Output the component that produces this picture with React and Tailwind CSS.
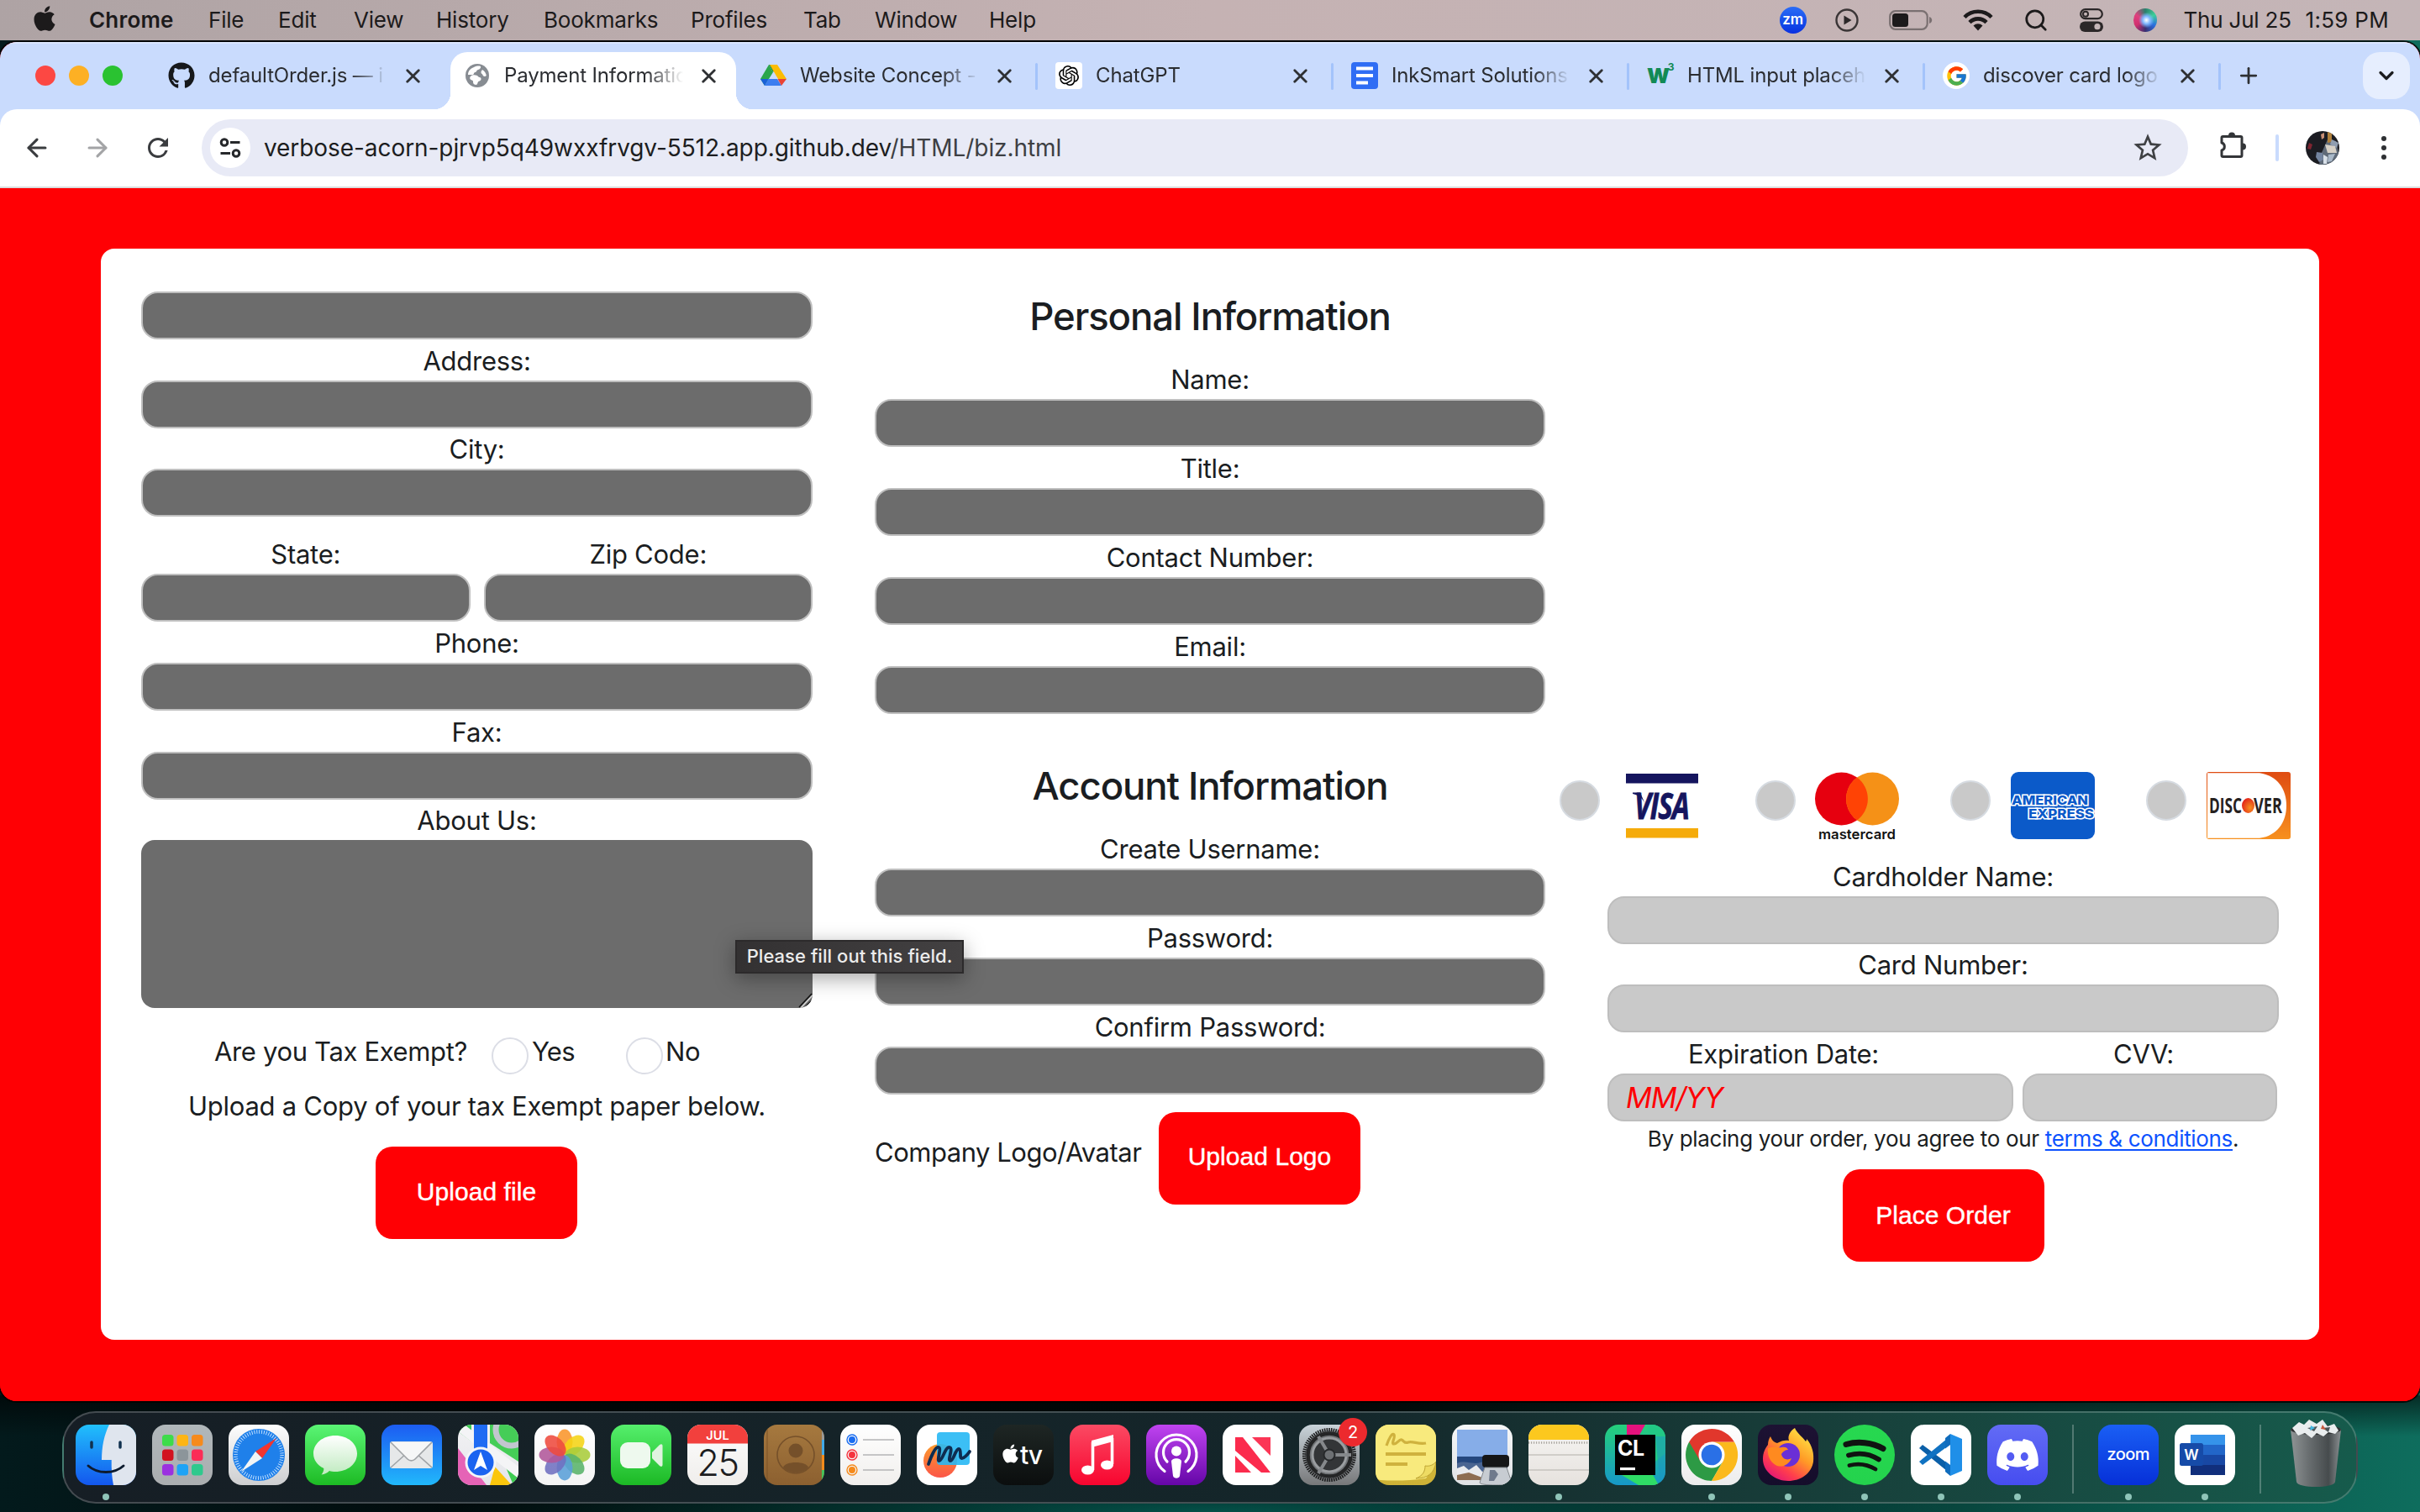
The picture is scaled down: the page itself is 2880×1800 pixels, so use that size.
import React from "react";
import { ArrowLeft, ArrowRight, X, Plus, ChevronDown, Search } from "lucide-react";
import { FaApple, FaGithub, FaDiscord } from "react-icons/fa";
import { FcGoogle } from "react-icons/fc";
import { MdStarBorder, MdRefresh } from "react-icons/md";
import { SiOpenai } from "react-icons/si";

/* ---------- macOS menu bar ---------- */

const menus = [
  ["File", "w-[83px]"],
  ["Edit", "w-[90px]"],
  ["View", "w-[98px]"],
  ["History", "w-[128px]"],
  ["Bookmarks", "w-[175px]"],
  ["Profiles", "w-[134px]"],
  ["Tab", "w-[85px]"],
  ["Window", "w-[136px]"],
  ["Help", "w-[70px]"],
];

function MenuBar() {
  return (
    <header className="flex h-12 items-center bg-linear-to-r from-[#aea3a4] via-[#c5b2b3] to-[#c4b5b7] pb-px text-[26px] leading-none tracking-[-0.2px] text-[#1c1a1b]">
      <FaApple className="ml-[36px] mt-[-4px] size-[34px]" />
      <span className="ml-[36px] w-[142px] font-semibold tracking-[0.2px]">Chrome</span>
      {menus.map(([name, width]) => (
        <span key={name} className={width}>{name}</span>
      ))}
      <div className="ml-auto flex items-center pr-[37px]">
        <span className="flex size-8 items-center justify-center rounded-full bg-linear-to-b from-[#2b6cf6] to-[#0b2fe0] text-[17px] font-semibold text-white">zm</span>
        <svg className="ml-[34px] size-7" viewBox="0 0 28 28">
          <circle cx="14" cy="14" r="12.5" fill="none" stroke="#3a3536" strokeWidth="2.4" />
          <path d="M10.5 8.5v11l9-5.500z" fill="#2b2728" />
        </svg>
        <svg className="ml-[36px] h-6 w-[52px]" viewBox="0 0 52 24">
          <rect x="1.200" y="1.200" width="44.500" height="21.600" rx="6.500" fill="none" stroke="#7a7071" strokeWidth="2.200" />
          <rect x="4" y="4" width="19" height="16" rx="3.500" fill="#1c1a1b" />
          <path d="M48 8v8c2.500-1 3.200-2.500 3.200-4S50.500 9 48 8z" fill="#7a7071" />
        </svg>
        <svg className="ml-[36px] h-[26px] w-9" viewBox="0 0 36 26">
          <g fill="none" stroke="#1c1a1b" strokeWidth="4.600">
            <path d="M2 9.500a22.500 22.500 0 0 1 32 0" />
            <path d="M8 15.600a14 14 0 0 1 20 0" />
          </g>
          <path d="M18 25.500l-5.500-6a8 8 0 0 1 11 0z" fill="#1c1a1b" />
        </svg>
        <Search className="ml-[36px] size-[30px]" strokeWidth={2.2} />
        <svg className="ml-[37px] h-7 w-7" viewBox="0 0 28 28">
          <rect x="1.200" y="1.200" width="25.600" height="11" rx="5.500" fill="none" stroke="#2b2728" strokeWidth="2.200" />
          <circle cx="7" cy="6.700" r="3" fill="none" stroke="#2b2728" strokeWidth="2" />
          <rect x="0" y="15.500" width="28" height="12.500" rx="6.250" fill="#2b2728" />
          <circle cx="21" cy="21.700" r="3.600" fill="#c4b5b7" />
        </svg>
        <span className="ml-[36px] size-7 rounded-full bg-[radial-gradient(circle_at_55%_50%,#ffffff_0,#7fb7ff_22%,transparent_45%),conic-gradient(#2b7f6b,#3ccf9a,#2a6fe0,#3a2f6f,#d0306f,#e0407f,#2b7f6b)]" />
        <span className="ml-[32px] w-[145px]">Thu Jul 25</span>
        <span className="tracking-[0.300px]">1:59 PM</span>
      </div>
    </header>
  );
}

/* ---------- browser chrome ---------- */

function GlobeIcon() {
  return (
    <svg className="mx-0.5 size-7" viewBox="0 0 28 28">
      <circle cx="14" cy="14" r="14" fill="#878c92" />
      <path d="M10 4c3-1.500 6-1.800 8-1 .5 2-1 3.500-3 4s-1.500 2.500-3.500 3-1 2.500-3 3H3c0-4 2.500-7.500 7-9z" fill="#fff" />
      <path d="M8 13.500c3-.8 6 0 7 1.500s3.500.5 3.500 3-2.500 2-3.500 3.500-.5 3-2.500 3.500c-3-.2-3.500-2-3.500-4s-2.500-1-3.500-3 1-4 2.500-4.500z" fill="#fff" />
      <path d="M20 7c3 2 4.500 4.500 4.800 7-1.500 1.500-3.800 1-4.300-.8s-2-1.200-2-3S19 8.500 20 7z" fill="#fff" />
    </svg>
  );
}

function DriveIcon() {
  return (
    <svg className="size-8" viewBox="0 0 32 32">
      <path d="M11 3h10l-5 9z" fill="#0f8a3c" />
      <path d="M11 3l5 9L6 28 1 20z" fill="#2aa64c" />
      <path d="M21 3H12l10 17h10z" fill="#fbbc04" />
      <path d="M1 20h9.500L6 28z" fill="#1a60d8" />
      <path d="M10.500 20H21l5 8H6z" fill="#3b7df0" />
      <path d="M21.500 20H32l-6 8z" fill="#ea4335" />
    </svg>
  );
}

function DocsIcon() {
  return (
    <svg className="size-8" viewBox="0 0 32 32">
      <rect width="32" height="32" rx="4" fill="#2f6df4" />
      <path d="M6 7.500h20M6 16h20M6 24.500h14" stroke="#fff" strokeWidth="4" />
    </svg>
  );
}

function PuzzleIcon({ className }) {
  return (
    <svg className={className} viewBox="0 0 36 36">
      <path d="M7.500 8.500h21a1.500 1.500 0 0 1 1.500 1.500v21a1.500 1.500 0 0 1-1.500 1.500h-21a1.500 1.500 0 0 1-1.500-1.500v-6a4.700 4.700 0 0 0 0-9v-6a1.500 1.500 0 0 1 1.500-1.500z" fill="none" stroke="#333538" strokeWidth="3" strokeLinejoin="round" />
      <path d="M14 7.500a4 4 0 0 1 8 0zM31 16.500a4 4 0 0 1 0 8z" fill="#333538" />
    </svg>
  );
}

const tabs = [
  { title: "defaultOrder.js — i", icon: <FaGithub className="size-8 text-[#16181b]" /> },
  { title: "Payment Informatio", icon: <GlobeIcon />, active: true },
  { title: "Website Concept -", icon: <DriveIcon />, divider: true },
  {
    title: "ChatGPT",
    divider: true,
    icon: (
      <span className="flex size-8 items-center justify-center rounded bg-white">
        <SiOpenai className="size-6 text-black" />
      </span>
    ),
  },
  { title: "InkSmart Solutions", icon: <DocsIcon />, divider: true },
  {
    title: "HTML input placeh",
    divider: true,
    icon: (
      <span className="flex size-8 items-start text-[#128a55]">
        <b className="mt-1 text-[25px] font-black leading-none tracking-tighter">W</b>
        <b className="ml-[-1px] text-[12px] leading-none">3</b>
      </span>
    ),
  },
  {
    title: "discover card logo",
    divider: true,
    icon: (
      <span className="flex size-8 items-center justify-center rounded-full bg-white">
        <FcGoogle className="size-[27px]" />
      </span>
    ),
  },
];

function Tab({ title, icon, active, divider }) {
  return (
    <div className="flex h-[68px] w-[352px] shrink-0">
      <div
        className={
          active
            ? "relative flex w-[340px] items-center rounded-t-[20px] bg-white pb-[12px] pl-4 before:absolute before:bottom-0 before:-left-5 before:size-5 before:bg-[radial-gradient(circle_at_0_0,transparent_20px,white_20.5px)] after:absolute after:bottom-0 after:-right-5 after:size-5 after:bg-[radial-gradient(circle_at_100%_0,transparent_20px,white_20.5px)]"
            : "flex w-[340px] items-center pb-[12px] pl-4"
        }
      >
        <span className="flex w-8 shrink-0">{icon}</span>
        <span className="ml-4 w-[222px] shrink-0 whitespace-nowrap text-[24px] leading-8 tracking-[-0.150px] text-[#2a2c30] [mask-image:linear-gradient(to_right,#000_76%,transparent_96%)]">
          {title}
        </span>
        <X className="ml-[8px] size-[27px] shrink-0 text-[#2e3033]" strokeWidth={2.5} />
      </div>
      {divider && <span className="ml-[4px] mt-[13px] h-8 w-[3px] rounded bg-[#a3c3fb]" />}
    </div>
  );
}

function TabStrip() {
  return (
    <div className="flex h-[80px] items-end border-t-2 border-[#dbe6fd] bg-[#c9dbfd]">
      <div className="mb-[28px] ml-[42px] flex w-[142px] gap-4">
        <span className="size-6 rounded-full bg-[#fc4843]" />
        <span className="size-6 rounded-full bg-[#fdb024]" />
        <span className="size-6 rounded-full bg-[#2ac231]" />
      </div>
      {tabs.map((tab) => (
        <Tab key={tab.title} {...tab} />
      ))}
      <Plus className="mb-[25px] ml-[13px] size-[30px] text-[#2e3033]" strokeWidth={2.2} />
      <span className="mb-3 mr-[12px] ml-auto flex size-14 items-center justify-center rounded-[20px] bg-[#e6eefe]">
        <ChevronDown className="size-7 text-[#1c1d1f]" strokeWidth={2.8} />
      </span>
    </div>
  );
}

function Toolbar() {
  return (
    <div className="bg-[#c9dbfd]">
      <div className="flex h-[92px] items-center rounded-t-[20px] bg-white">
        <ArrowLeft className="ml-[27px] size-[34px] text-[#3a3c3f]" strokeWidth={2.2} />
        <ArrowRight className="ml-[38px] size-[34px] text-[#a3a4a6]" strokeWidth={2.2} />
        <MdRefresh className="ml-[37px] size-[36px] text-[#3a3c3f]" />
        <div className="ml-[34px] flex h-[68px] w-[2364px] items-center rounded-full bg-[#e8eaf6]">
          <span className="ml-2.5 flex size-12 items-center justify-center rounded-full bg-white">
            <svg className="size-7" viewBox="0 0 28 28" fill="none" stroke="#26282b" strokeWidth="3">
              <circle cx="7" cy="7.500" r="3.800" />
              <path d="M14 7.500h11.500M2.500 20.500H14" />
              <circle cx="21" cy="20.500" r="3.800" />
            </svg>
          </span>
          <span className="ml-4 text-[28px] leading-none tracking-[-0.070px] text-[#1c1d20]">
            verbose-acorn-pjrvp5q49wxxfrvgv-5512.app.github.dev<span className="text-[#3d3f43]">/HTML/biz.html</span>
          </span>
          <MdStarBorder className="mr-[28px] ml-auto size-10 text-[#3f4144]" />
        </div>
        <PuzzleIcon className="-mt-2 ml-[34px] size-[36px]" />
        <span className="ml-[34px] h-8 w-1 rounded bg-[#c9dbfd]" />
        <svg className="ml-[32px] size-10 rounded-full" viewBox="0 0 40 40">
          <rect width="40" height="40" fill="#1b1c22" />
          <path d="M26 10l10 2 4 18-8 10H16l2-12z" fill="#5f6a78" />
          <path d="M26 1h5v12l-5 1z" fill="#b0803c" />
          <path d="M18 4l4-2v6l-3 2z" fill="#c98f76" />
          <path d="M31 10l8 4-2 6-8-4z" fill="#8f9db0" />
          <path d="M23 16l12 2 2 8-11 0z" fill="#d6d0c6" />
          <path d="M4 14l4 2-2 6-4-1z" fill="#7d2430" />
          <path d="M13 25l7 1 1 8-5 3-4-6z" fill="#7384a0" />
          <path d="M21 28l5 3-1 8h-4z" fill="#d8e0e8" />
          <path d="M27 28l8-1-4 9-5 1z" fill="#a9b8c8" />
        </svg>
        <span className="ml-[50px] flex flex-col gap-[5px]">
          <i className="size-1.5 rounded-full bg-[#2e3033]" />
          <i className="size-1.5 rounded-full bg-[#2e3033]" />
          <i className="size-1.5 rounded-full bg-[#2e3033]" />
        </span>
      </div>
    </div>
  );
}

/* ---------- form ---------- */

function Label({ children, className = "h-[49px] pt-[2px]" }) {
  return (
    <div className={`${className} text-center text-[31px] leading-[48px] tracking-[-0.250px] whitespace-nowrap text-[#1a1d21]`}>
      {children}
    </div>
  );
}

const Dark = () => <div className="h-[57px] rounded-[20px] border-2 border-[#bfbfbf] bg-[#6c6c6c]" />;

function Light({ className = "", children }) {
  return (
    <div className={`${className} flex h-[57px] items-center rounded-[20px] border-2 border-[#bebebe] bg-[#c9c9c9]`}>
      {children}
    </div>
  );
}

function RedButton({ children, className = "" }) {
  return (
    <button className={`${className} flex h-[110px] w-60 items-center justify-center rounded-[20px] bg-[#ff0004] font-['Liberation_Sans',sans-serif] text-[30px] tracking-[0.050px] text-white [-webkit-text-stroke:0.4px_white]`}>
      {children}
    </button>
  );
}

function CompanyColumn() {
  return (
    <section className="w-[799px]">
      <Dark />
      <Label>Address:</Label>
      <Dark />
      <Label className="h-12 pt-px">City:</Label>
      <Dark />
      <div className="mt-[19px] grid grid-cols-2 gap-x-4">
        <Label>State:</Label>
        <Label>Zip Code:</Label>
        <Dark />
        <Dark />
      </div>
      <Label>Phone:</Label>
      <Dark />
      <Label>Fax:</Label>
      <Dark />
      <Label className="h-12 pt-px">About Us:</Label>
      <div className="flex h-[200px] items-end justify-end overflow-hidden rounded-2xl bg-[#6c6c6c]">
        <svg className="h-5 w-[18px]" viewBox="0 0 18 20">
          <path d="M2 19L17 3" stroke="#111" strokeWidth="1.500" />
          <path d="M4 20L18 5" stroke="#ddd" strokeWidth="1.500" />
          <path d="M9 19L17 11" stroke="#111" strokeWidth="1.500" />
        </svg>
      </div>
      <div className="mt-7 ml-[87px] flex h-12">
        <Label className="w-[330px] [&]:text-left [&]:tracking-[-0.350px]">Are you Tax Exempt?</Label>
        <span className="mt-[7px] size-11 rounded-full border-2 border-[#dcdee6]" />
        <Label className="ml-[4px] w-[112px] [&]:text-left [&]:tracking-[-0.800px]">Yes</Label>
        <span className="mt-[7px] size-11 rounded-full border-2 border-[#dcdee6]" />
        <Label className="ml-[3px] [&]:text-left">No</Label>
      </div>
      <Label className="mt-[17px]">Upload a Copy of your tax Exempt paper below.</Label>
      <RedButton className="mt-6 ml-[279px] pb-[4px]">Upload file</RedButton>
    </section>
  );
}

function Heading({ children, className = "" }) {
  return (
    <h3 className={`${className} h-[58px] text-center text-[45.500px] leading-[58px] font-[450] tracking-[-1.100px] text-[#1a1d21]`}>
      {children}
    </h3>
  );
}

function PersonColumn() {
  return (
    <section className="ml-[74px] w-[798px]">
      <Heading className="mb-[21px] pt-px">Personal Information</Heading>
      <Label>Name:</Label>
      <Dark />
      <Label>Title:</Label>
      <Dark />
      <Label>Contact Number:</Label>
      <Dark />
      <Label>Email:</Label>
      <Dark />
      <Heading className="mt-[57px] mb-5">Account Information</Heading>
      <Label>Create Username:</Label>
      <Dark />
      <Label>Password:</Label>
      <Dark />
      <Label>Confirm Password:</Label>
      <Dark />
      <div className="mt-[21px] flex">
        <Label className="mt-6 w-[338px] [&]:text-left [&]:tracking-[-0.480px]">Company Logo/Avatar</Label>
        <RedButton className="pb-[5px]">Upload Logo</RedButton>
      </div>
    </section>
  );
}

function VisaLogo() {
  return (
    <svg className="h-20 w-[100px]" viewBox="0 0 100 80">
      <rect x="7" y="2" width="86" height="11.500" fill="#15155e" />
      <rect x="7" y="67" width="86" height="11.500" fill="#f5ab0a" />
      <g transform="translate(17 55.500) scale(0.780 1)">
        <text fontFamily="Open Sans" fontWeight="700" fontStyle="italic" fontSize="43" letterSpacing="-1.500" fill="#15155e" stroke="#15155e" strokeWidth="0.800">VISA</text>
      </g>
      <path d="M15 24.500h9l6 14c-3-7-8-11-15-12.500z" fill="#15155e" />
    </svg>
  );
}

function MastercardLogo() {
  return (
    <svg className="-ml-px h-[88px] w-[100px]" viewBox="0 0 100 88">
      <circle cx="31.500" cy="32" r="31.500" fill="#e6000f" />
      <circle cx="68.500" cy="32" r="31.500" fill="#f59117" />
      <path d="M50 6.600a31.500 31.500 0 0 1 0 50.800a31.500 31.500 0 0 1 0-50.800z" fill="#ff4305" />
      <text x="4" y="80" fontFamily="Inter" fontWeight="600" fontSize="16.500" textLength="92" lengthAdjust="spacingAndGlyphs" fill="#111">mastercard</text>
    </svg>
  );
}

function AmexLogo() {
  return (
    <svg className="h-20 w-[100px] rounded-[9px]" viewBox="0 0 100 80">
      <rect width="100" height="80" fill="#0b5ac9" />
      <g fontFamily="Inter" fontWeight="800" fontSize="15" fill="#0b5ac9" stroke="#fff" strokeWidth="3" paintOrder="stroke">
        <text x="1" y="38.500" textLength="91" lengthAdjust="spacingAndGlyphs">AMERICAN</text>
        <text x="21" y="55" textLength="78" lengthAdjust="spacingAndGlyphs">EXPRESS</text>
      </g>
    </svg>
  );
}

function DiscoverLogo() {
  return (
    <svg className="h-20 w-[100px] rounded-[3px]" viewBox="0 0 100 80">
      <defs>
        <linearGradient id="disc" x1="0" y1="0" x2="0" y2="1">
          <stop offset="0" stopColor="#df4c12" />
          <stop offset="1" stopColor="#f7901e" />
        </linearGradient>
        <radialGradient id="disc-o" cx="0.650" cy="0.650" r="0.700">
          <stop offset="0" stopColor="#f7901e" />
          <stop offset="1" stopColor="#e2231a" />
        </radialGradient>
      </defs>
      <rect width="100" height="80" fill="url(#disc)" />
      <path d="M1 1.200h62C84 4 95 20 95 40S84 76 63 78.800H1z" fill="#fff" />
      <g fontFamily="Open Sans" fontWeight="700" fontSize="24.500" fill="#26211f">
        <text x="3" y="49" textLength="39" lengthAdjust="spacingAndGlyphs">DISC</text>
        <text x="56" y="49" textLength="34" lengthAdjust="spacingAndGlyphs">VER</text>
      </g>
      <ellipse cx="49.500" cy="40" rx="7.500" ry="9" fill="url(#disc-o)" />
    </svg>
  );
}

function PaymentColumn() {
  return (
    <section className="mt-[572px] ml-[74px] w-[799px]">
      <div className="-ml-[57px] flex h-[82px] w-[872px] items-start">
        {[VisaLogo, MastercardLogo, AmexLogo, DiscoverLogo].map((Logo, i) => (
          <div key={i} className="flex w-[232.600px] shrink-0 items-start gap-6">
            <span className="mt-2.5 size-12 rounded-full border-2 border-[#d6dbe1] bg-[#c9c9c9]" />
            <Logo />
          </div>
        ))}
      </div>
      <Label className="mt-[17px] h-[49px] pt-[2px]">Cardholder Name:</Label>
      <Light />
      <Label className="h-12 pt-px">Card Number:</Label>
      <Light />
      <div className="flex">
        <Label className="h-[49px] w-[419px] pt-[2px]">Expiration Date:</Label>
        <Label className="ml-[58px] h-[49px] w-[322px] pt-[2px]">CVV:</Label>
      </div>
      <div className="flex gap-[11px]">
        <Light className="w-[483px] pl-5">
          <span className="text-[34px] leading-none tracking-[-0.950px] text-[#ff0004] italic">MM/YY</span>
        </Light>
        <Light className="w-[303px]" />
      </div>
      <p className="h-10 pt-px text-center text-[26px] leading-10 tracking-[-0.320px] whitespace-nowrap text-[#1a1d21]">
        By placing your order, you agree to our{" "}
        <a className="text-[#0d52ff] underline decoration-2 underline-offset-[3px]">terms &amp; conditions</a>.
      </p>
      <RedButton className="mx-auto mt-[17px] pb-[2px]">Place Order</RedButton>
    </section>
  );
}

/* ---------- dock ---------- */

const Grad = ({ id, from, to }) => (
  <linearGradient id={id} x1="0" y1="0" x2="0" y2="1">
    <stop offset="0" stopColor={from} />
    <stop offset="1" stopColor={to} />
  </linearGradient>
);

/* Rounded square of one dock app; drawings use a 72-unit grid. */
function AppIcon({ id, from, to, children }) {
  return (
    <svg className="size-[72px] rounded-2xl" viewBox="0 0 72 72">
      <defs><Grad id={`bg-${id}`} from={from} to={to} /></defs>
      <rect width="72" height="72" fill={`url(#bg-${id})`} />
      {children}
    </svg>
  );
}

const padColors = ["#3ddc4a", "#fdb515", "#f68a1c", "#d2121f", "#8c959a", "#fb2c57", "#9b30e0", "#1fa3f5", "#2fc98d"];
const petals = ["#f9952a", "#f5d415", "#a9cc3a", "#59b36a", "#5a9fd8", "#6f6fc0", "#b0579a", "#ee4a3d"];

const dockApps = [
  {
    name: "Finder", running: true, from: "#21c0fc", to: "#1356ee",
    art: (
      <>
        <path d="M40 0h32v72H45c-2-10-2.500-20-2.300-30H31C31 26 34 12 40 0z" fill="#dfe5ee" />
        <path d="M19 21v6M53 21v6" stroke="#11314f" strokeWidth="3.500" strokeLinecap="round" />
        <path d="M15 49c11 10 31 10 42 0" fill="none" stroke="#0d1b2e" strokeWidth="3" strokeLinecap="round" />
      </>
    ),
  },
  {
    name: "Launchpad", from: "#b0b7ba", to: "#abaeb0",
    art: padColors.map((c, i) => (
      <rect key={c} x={12 + (i % 3) * 17.5} y={12 + Math.floor(i / 3) * 17.5} width="13.500" height="13.500" rx="3.500" fill={c} />
    )),
  },
  {
    name: "Safari", from: "#fdfdfd", to: "#cdced0",
    art: (
      <>
        <circle cx="36" cy="36" r="31" fill="#1f80ea" />
        <circle cx="36" cy="36" r="27.500" fill="none" stroke="#cfe6ff" strokeWidth="4.500" strokeDasharray="0.900 1.980" />
        <path d="M57 16L40 40l-8-8z" fill="#f3352f" />
        <path d="M15 56l17-24 8 8z" fill="#f2f4f6" />
      </>
    ),
  },
  {
    name: "Messages", from: "#5af575", to: "#1dbb24",
    art: (
      <>
        <defs><Grad id="bubble" from="#ffffff" to="#bfeabf" /></defs>
        <path d="M36 13c15 0 26 9.500 26 21.500S51 56 36 56c-2.500 0-5-.300-7-1-2.500 2.500-5.500 4-9.500 4.500 2-2.500 3-5 2.800-7.500C14.500 48 10 42 10 34.500 10 22.500 21 13 36 13z" fill="url(#bubble)" />
      </>
    ),
  },
  {
    name: "Mail", from: "#1c5cf2", to: "#21b8fb",
    art: (
      <>
        <rect x="10" y="20" width="51" height="32" rx="3" fill="#e6e8e9" />
        <path d="M11 51l19-17M60 51L41 34" stroke="#a0a4a7" strokeWidth="1.600" />
        <path d="M11 21l20 20c2.500 2.500 6.500 2.500 9 0l20-20" fill="#f6f7f7" stroke="#a0a4a7" strokeWidth="1.600" />
      </>
    ),
  },
  {
    name: "Maps", from: "#f2f2f4", to: "#e4e5ea",
    art: (
      <>
        <path d="M0 0h16v20L0 8z" fill="#3ecb52" />
        <path d="M38 0h34v44L38 22z" fill="#45cd57" />
        <path d="M0 28l34 44H0z" fill="#e563b6" />
        <path d="M44 50l20 22H38z" fill="#fbc60c" />
        <path d="M54 44l18 16v12H66z" fill="#3ecb52" />
        <path d="M0 8l72 56v-14L0-6z" fill="#f4f4f6" />
        <circle cx="64" cy="6" r="19" fill="none" stroke="#c2c6cf" strokeWidth="7" />
        <rect x="19" width="16" height="40" fill="#1f6bf3" />
        <circle cx="27" cy="45" r="18.500" fill="#f3f5f8" />
        <circle cx="27" cy="45" r="15.500" fill="#1a63f0" />
        <path d="M27 32l8 22-8-5-8 5z" fill="#fff" />
      </>
    ),
  },
  {
    name: "Photos", from: "#ffffff", to: "#f4f4f4",
    art: petals.map((c, i) => (
      <ellipse key={c} cx="36" cy="20.500" rx="9.500" ry="15" fill={c} fillOpacity="0.880" transform={`rotate(${i * 45} 36 36)`} />
    )),
  },
  {
    name: "FaceTime", from: "#55ef6c", to: "#1cb925",
    art: (
      <>
        <rect x="11" y="21" width="36" height="31" rx="9" fill="#eef9ee" />
        <path d="M49 33l9-9c2-1.500 3.500-1 3.500 1.500v22c0 2.500-1.500 3-3.500 1.500l-9-9z" fill="#dff3df" />
      </>
    ),
  },
  {
    name: "Calendar", from: "#fefefe", to: "#efedeb",
    art: (
      <>
        <rect width="72" height="22.500" fill="#f2403d" />
        <text x="36" y="17.500" textAnchor="middle" fontFamily="Inter" fontWeight="600" fontSize="14.500" fill="#fff">JUL</text>
        <text x="36" y="60.500" textAnchor="middle" fontFamily="Inter" fontWeight="300" fontSize="43" letterSpacing="-1.500" fill="#1d1d1f">25</text>
      </>
    ),
  },
  {
    name: "Contacts", from: "#a6793f", to: "#8c6030",
    art: (
      <>
        <rect x="69" width="3" height="18" fill="#9a9a98" />
        <rect x="69" y="18" width="3" height="18" fill="#41a9e8" />
        <rect x="69" y="36" width="3" height="18" fill="#f38b1c" />
        <rect x="69" y="54" width="3" height="18" fill="#46c35a" />
        <path d="M4 0v72" stroke="#7a5226" strokeWidth="1" />
        <circle cx="38" cy="36" r="22" fill="none" stroke="#75502a" strokeWidth="1.600" />
        <circle cx="38" cy="31" r="8.500" fill="#75502a" />
        <path d="M23 51c2-8 28-8 30 0-7 8-23 8-30 0z" fill="#75502a" />
      </>
    ),
  },
  {
    name: "Reminders", from: "#ffffff", to: "#f1efed",
    art: [["#1a6df0", 18], ["#f5333f", 36], ["#f58a1c", 54]].map(([c, y]) => (
      <g key={c}>
        <circle cx="14" cy={y} r="6" fill="none" stroke={c} strokeWidth="1.400" />
        <circle cx="14" cy={y} r="4" fill={c} />
        <path d={`M27 ${y}h37`} stroke="#b4b4b6" strokeWidth="1.600" />
      </g>
    )),
  },
  {
    name: "Freeform", from: "#ffffff", to: "#ffffff",
    art: (
      <>
        <defs><Grad id="free" from="#fb9a2c" to="#fb5648" /></defs>
        <circle cx="28" cy="43" r="20" fill="url(#free)" />
        <rect x="24" y="9" width="39" height="39" rx="4" fill="#27b8f4" fillOpacity="0.900" />
        <path d="M14 47c3-9 8-21 12-20s-3 17 1 16 7-17 12-16-3 16 1 16 6-14 10-14 0 12 4 11 6-4 9-8" fill="none" stroke="#0e2c50" strokeWidth="3.800" strokeLinecap="round" />
      </>
    ),
  },
  {
    name: "TV", from: "#1e2624", to: "#0b0e0e",
    art: (
      <>
        <g transform="translate(8 22)"><FaApple size={25} color="#fff" /></g>
        <text x="32" y="46.500" fontFamily="Inter" fontWeight="500" fontSize="30" letterSpacing="-1" fill="#fff">tv</text>
      </>
    ),
  },
  {
    name: "Music", from: "#fb4a63", to: "#f8052f",
    art: (
      <>
        <path d="M26 19l26-7v8l-26 7z" fill="#fff" />
        <path d="M27.500 21v33M50.500 16v31" stroke="#fff" strokeWidth="3.600" />
        <ellipse cx="21.500" cy="54" rx="7.500" ry="5.500" fill="#fff" />
        <ellipse cx="44.500" cy="48" rx="7.500" ry="5.500" fill="#fff" />
      </>
    ),
  },
  {
    name: "Podcasts", from: "#c044f0", to: "#6506a8",
    art: (
      <>
        <g fill="none" stroke="#fff" strokeWidth="3.200" strokeLinecap="round">
          <path d="M22 55.500a24 24 0 1 1 28 0" />
          <path d="M25 44a15.500 15.500 0 1 1 22 0" />
        </g>
        <circle cx="36" cy="31.500" r="6" fill="#fff" />
        <path d="M30 44c0-5 12-5 12 0l-2 17c-.800 3.500-7.200 3.500-8 0z" fill="#fff" />
      </>
    ),
  },
  {
    name: "News", from: "#ffffff", to: "#ffffff",
    art: (
      <>
        <path d="M15 15h9l33 42h-11L15 31z" fill="#fb2b4d" />
        <path d="M35 15h22v22z" fill="#fb2b4d" opacity="0.950" />
        <path d="M15 37l19 20H15z" fill="#fb2b4d" />
      </>
    ),
  },
  {
    name: "Settings", badge: "2", from: "#c9d3d9", to: "#77787a",
    art: (
      <>
        <circle cx="36" cy="36" r="29" fill="#707376" />
        <circle cx="36" cy="36" r="30" fill="none" stroke="#1b1c1d" strokeWidth="4" strokeDasharray="1.600 1.100" />
        <circle cx="36" cy="36" r="25.500" fill="none" stroke="#242526" strokeWidth="4.500" />
        <circle cx="36" cy="36" r="20" fill="#333537" stroke="#9a9da0" strokeWidth="3" />
        <path d="M36 36h26M36 36L23 14M36 36L23 58" stroke="#85888b" strokeWidth="4" />
        <circle cx="36" cy="36" r="6.500" fill="#6d7073" stroke="#26282a" strokeWidth="2" />
      </>
    ),
  },
  {
    name: "Stickies", from: "#d8be3f", to: "#cdb136",
    art: (
      <>
        <path d="M0 0h72v46L60 64c-20 3-40 3-54 2C2 66 0 62 0 58z" fill="#f8ea7d" />
        <path d="M72 44c-2 14-10 20-24 20 8-3 11-8 11-15 5 1 10-1 13-5z" fill="#eedb62" stroke="#bda434" strokeWidth="1" />
        <path d="M13 25c3-9 7-16 9-13s-4 11 0 11 6-6 9-5 3 5 8 3 12 3 21 1" fill="none" stroke="#cfb23e" strokeWidth="3.200" />
        <path d="M12 35h48M12 47h26" stroke="#cfb23e" strokeWidth="4" />
      </>
    ),
  },
  {
    name: "Preview", from: "#f6f7f8", to: "#dfe2e5",
    art: (
      <>
        <rect x="6" y="6" width="60" height="34" fill="#86ade8" />
        <rect x="6" y="38" width="60" height="12" fill="#24477e" />
        <path d="M6 46c10-4 18 2 28-1s18 2 32-1v22H6z" fill="#4a6592" />
        <path d="M6 52l8-3 6 5 9-6 7 8 12-4v14H6z" fill="#e8eaee" />
        <path d="M6 60l14-3 16 6v3H6z" fill="#8d6d52" />
        <rect x="36" y="36" width="32" height="15" rx="4" fill="#151617" />
        <path d="M39 51h26l6 18c0 4-38 4-38 0z" fill="#c7ccd2" stroke="#85898e" />
        <path d="M45 54h6l4 5-5 8h-6z" fill="#6f7a8c" />
      </>
    ),
  },
  {
    name: "Notes", running: true, from: "#f6f5f3", to: "#e6e2de",
    art: (
      <>
        <rect width="72" height="18" fill="#fcc81e" />
        <path d="M0 21.500h72" stroke="#a8a49e" strokeWidth="2.400" strokeDasharray="1.200 1.800" />
        <path d="M0 36h72M0 54h72" stroke="#c6c3bf" strokeWidth="1.400" />
      </>
    ),
  },
  {
    name: "CLion", from: "#25d07a", to: "#1697c8",
    art: (
      <>
        <path d="M26 0h22l-8 14H26z" fill="#e5127d" />
        <path d="M50 0h22v34L60 44z" fill="#22c885" />
        <path d="M20 60l20 12h24l-8-14z" fill="#2fdc66" />
        <path d="M60 14h12v58H66z" fill="#1b93c4" opacity="0.500" />
        <rect x="12" y="12" width="48" height="48" fill="#000" />
        <text x="15" y="36.500" fontFamily="Inter" fontWeight="700" fontSize="25" letterSpacing="-0.500" fill="#fff">CL</text>
        <rect x="18" y="51" width="18" height="3.200" fill="#fff" />
      </>
    ),
  },
  {
    name: "Chrome", running: true, from: "#ffffff", to: "#ececec",
    art: (
      <>
        <path d="M9.200 20.500A31 31 0 0 0 36 67L49.400 43.700 36 36z" fill="#2d9a45" />
        <path d="M36 20.500h27A31 31 0 0 1 36 67l13.400-23.300z" fill="#fbb91c" />
        <path d="M36 5a31 31 0 0 1 26.900 15.500H36L22.600 43.700 9.200 20.500A31 31 0 0 1 36 5z" fill="#e1372c" />
        <circle cx="36" cy="36" r="15.500" fill="#fff" />
        <circle cx="36" cy="36" r="12.300" fill="#2a70e6" />
      </>
    ),
  },
  {
    name: "Firefox", running: true, from: "#1d1233", to: "#150d2b",
    art: (
      <>
        <defs>
          <linearGradient id="fox" x1="0.900" y1="0" x2="0.200" y2="1">
            <stop offset="0" stopColor="#fff14a" />
            <stop offset="0.450" stopColor="#ff9a26" />
            <stop offset="0.750" stopColor="#ff3d4d" />
            <stop offset="1" stopColor="#e0127c" />
          </linearGradient>
        </defs>
        <path d="M44 4c3 7 9 10 13 16 1-1 1-2 1-3 7 8 9 18 8 27-2 14-15 23-30 23S6 56 6 41c0-8 3-13 6-17 0-4 1-7 3-10 2 5 4 7 8 8 5-3 10-4 14-3-2-6 2-12 7-15z" fill="url(#fox)" />
        <circle cx="36" cy="36" r="14" fill="#6a2fd6" />
        <path d="M12 28c8-3 12 0 16-1s7 0 8 3c-4 0-6 2-8 5 1 6 7 8 12 5-3 8-12 12-19 8S11 36 12 28z" fill="#ff8a1f" />
      </>
    ),
  },
  {
    name: "Spotify", running: true, round: true, from: "#27d850", to: "#24d34d",
    art: (
      <g fill="none" stroke="#101311" strokeLinecap="round">
        <path d="M14 23.500c14-4 31-2.500 44 5" strokeWidth="7" />
        <path d="M17 36.500c12-3.500 25-2 36 5" strokeWidth="5.800" />
        <path d="M18 48.500c11-3 21-1.500 31 4.500" strokeWidth="4.800" />
      </g>
    ),
  },
  {
    name: "VS Code", running: true, from: "#ffffff", to: "#ffffff",
    art: (
      <>
        <path d="M10 28l4-4 35 26v10z" fill="#0b5fa8" />
        <path d="M10 44l4 4 35-26V12z" fill="#1072c2" />
        <path d="M47 11l14 6v38l-14 6V22z" fill="#1f8fe8" />
        <path d="M47 11v50l-6-5V16z" fill="#0f6cbd" />
        <path d="M47 24v24L31 36z" fill="#fff" />
      </>
    ),
  },
  {
    name: "Discord", running: true, from: "#626bf5", to: "#464df0",
    art: <g transform="translate(9 9)"><FaDiscord size={54} color="#fff" /></g>,
  },
  { divider: true, name: "divider-a" },
  {
    name: "Zoom", running: true, from: "#1a5ff5", to: "#0630d8",
    art: <text x="36" y="41.500" textAnchor="middle" fontFamily="Inter" fontWeight="500" fontSize="20" textLength="51" fill="#fff">zoom</text>,
  },
  {
    name: "Word", running: true, from: "#ffffff", to: "#ffffff",
    art: (
      <>
        <rect x="19" y="12" width="41" height="12" fill="#3593ea" />
        <rect x="19" y="24" width="41" height="12" fill="#2266c8" />
        <rect x="19" y="36" width="41" height="12" fill="#1848a4" />
        <rect x="19" y="48" width="41" height="12" fill="#112f7c" />
        <rect x="6" y="22" width="28" height="27" rx="2.500" fill="#164ba8" />
        <text x="20" y="42" textAnchor="middle" fontFamily="Inter" fontWeight="600" fontSize="17" fill="#fff">W</text>
      </>
    ),
  },
  { divider: true, name: "divider-b" },
];

function Trash() {
  return (
    <svg className="-mt-2 h-[84px] w-[64px]" viewBox="0 0 64 84">
      <defs>
        <linearGradient id="can" x1="0" x2="1" y1="0" y2="0">
          <stop offset="0" stopColor="#8f9495" />
          <stop offset="0.350" stopColor="#6a6f71" />
          <stop offset="0.750" stopColor="#464b4d" />
          <stop offset="1" stopColor="#8b9092" />
        </linearGradient>
      </defs>
      <path d="M2 14c0-4 60-4 60 0l-7 62c-1 8-45 8-46 0z" fill="url(#can)" />
      <ellipse cx="32" cy="14" rx="30" ry="6" fill="#2e3233" />
      <path d="M4 12l8-7 6 3 6-6 9 5 7-5 6 8 8-3 5 8-4 4-8-2-6 5-8-4-6 6-8-6-8 3z" fill="#e9edee" />
      <path d="M22 12l8 4 4-6zM40 12l7 5 2-6z" fill="#4c5557" />
      <path d="M26 9l5 3-6 3z" fill="#43b7e0" />
      <path d="M40 8l4 6-6-1z" fill="#c85a3e" />
    </svg>
  );
}

function Dock() {
  return (
    <nav className="mx-auto mt-3 flex h-[110px] w-[2732px] rounded-[40px] border-2 border-white/20 bg-linear-to-r from-[#161e25] via-[#14262a] via-55% to-[#165b4c] pt-3.5 pl-[4px]">
      {dockApps.map((app) =>
        app.divider ? (
          <span key={app.name} className="mr-[19px] ml-5 h-[82px] w-0.5 shrink-0 bg-white/25" />
        ) : (
          <div key={app.name} className="relative flex w-[91px] shrink-0 flex-col items-center">
            <span className={app.round ? "overflow-hidden rounded-full" : ""}>
              <AppIcon id={app.name.replace(" ", "")} from={app.from} to={app.to}>{app.art}</AppIcon>
            </span>
            {app.running && <i className="mt-2.5 size-2 rounded-full bg-[#8fc4b8]" />}
            {app.badge && (
              <span className="absolute -top-2 right-0 flex size-[34px] items-center justify-center rounded-full bg-[#ec2a2e] text-[20px] leading-none text-white">{app.badge}</span>
            )}
          </div>
        )
      )}
      <div className="flex w-[91px] justify-center"><Trash /></div>
    </nav>
  );
}

export default function App() {
  return (
    <div className="h-[1800px] w-[2880px] overflow-hidden bg-[linear-gradient(to_bottom,transparent_1660px,rgba(0,0,0,0.6)_1662px,transparent_1710px),radial-gradient(ellipse_900px_60px_at_50%_100%,#045048_0,transparent_100%),linear-gradient(to_right,#031a1c_0,#020b0c_20%,#020c0c_55%,#063a34_75%,#0e6d5d_100%)] font-['Inter',sans-serif]">
      <MenuBar />
      <main className="mt-0.5 h-[1618px] overflow-hidden rounded-[20px] bg-[#ff0004] ring-2 ring-black/80">
        <TabStrip />
        <Toolbar />
        <div className="relative h-[1446px] border-t-2 border-[#dcdcdc] bg-[#ff0004] px-[120px] pt-[72px]">
          <div className="flex h-[1299px] w-[2640px] items-start rounded-2xl bg-white pt-[51px] pl-12">
            <CompanyColumn />
            <PersonColumn />
            <PaymentColumn />
          </div>
          <div className="absolute top-[895px] left-[875px] flex h-10 w-[272px] items-center justify-center border-2 border-[#2c2a2b] bg-linear-to-r from-[#333132] to-[#434142] pb-0.5 text-[22px] leading-none font-medium tracking-[0.050px] text-[#ececec] shadow-[0_6px_24px_rgba(0,0,0,0.350)]">
            Please fill out this field.
          </div>
        </div>
      </main>
      <Dock />
    </div>
  );
}
